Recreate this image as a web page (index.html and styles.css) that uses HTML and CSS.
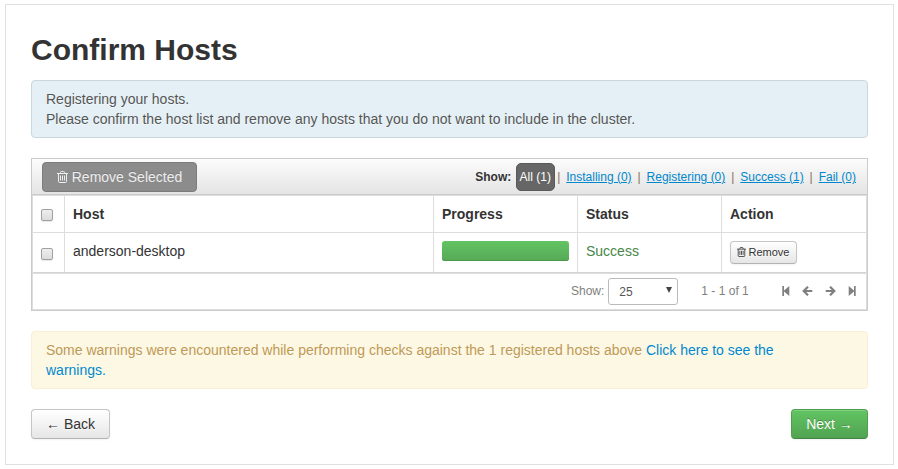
FILE: index.html
```html
<!DOCTYPE html>
<html lang="en">
<head>
<meta charset="utf-8">
<title>Confirm Hosts</title>
<link rel="stylesheet" href="styles.css">
</head>
<body>
<svg class="defs" width="0" height="0" aria-hidden="true">
  <symbol id="trash" viewBox="0 0 11 12"><path d="M0 2.500h11M3.500 2.500v-1q0-1 1-1h2q1 0 1 1v1M1.500 2.500v8q0 1 1 1h6q1 0 1-1v-8M3.500 4.500v5M5.500 4.500v5M7.500 4.500v5" fill="none" stroke="currentColor"/></symbol>
  <symbol id="first" viewBox="0 0 8 10"><path d="M0.300 0h1.700v4.500L7.300 0v10L2 5.500V10H0.300z" fill="currentColor"/></symbol>
  <symbol id="arrow" viewBox="0 0 11 10"><path d="M6 0.700L1.700 5L6 9.300M2 5h8.300" fill="none" stroke="currentColor" stroke-width="2.200"/></symbol>
</svg>
<main class="wizard">
  <h1>Confirm Hosts</h1>
  <div class="alert info">Registering your hosts.<br>Please confirm the host list and remove any hosts that you do not want to include in the cluster.</div>
  <section class="hosts">
    <div class="toolbar">
      <button class="btn dark"><svg class="icon"><use href="#trash"/></svg>Remove Selected</button>
      <div class="filters"><b>Show:</b><a class="active">All (1)</a><i>|</i><a>Installing (0)</a><i>|</i><a>Registering (0)</a><i>|</i><a>Success (1)</a><i>|</i><a>Fail (0)</a></div>
    </div>
    <div class="table">
      <div class="row head"><div><span class="check"></span></div><div>Host</div><div>Progress</div><div>Status</div><div>Action</div></div>
      <div class="row item"><div><span class="check"></span></div><div>anderson-desktop</div><div><span class="bar"></span></div><div class="success">Success</div><div><button class="btn mini"><svg class="icon"><use href="#trash"/></svg>Remove</button></div></div>
      <div class="pager">
        <span>Show:</span>
        <div class="select"><span>25</span><svg width="6" height="6"><path d="M0 0h6L3 6z" fill="#444"/></svg></div>
        <span class="range">1 - 1 of 1</span>
        <div class="nav">
          <svg width="8" height="10"><use href="#first"/></svg>
          <svg width="11" height="10"><use href="#arrow"/></svg>
          <svg class="flip" width="11" height="10"><use href="#arrow"/></svg>
          <svg class="flip" width="8" height="10"><use href="#first"/></svg>
        </div>
      </div>
    </div>
  </section>
  <div class="alert warn">Some warnings were encountered while performing checks against the 1 registered hosts above <a>Click here to see the<br>warnings.</a></div>
  <div class="actions"><button class="btn">← Back</button><button class="btn green">Next →</button></div>
</main>
</body>
</html>
```

FILE: styles.css
```css
* { box-sizing: border-box; }
body { margin: 0; padding: 4px 4px 4px 5px; background: #fff; color: #333; font: 14px/20px "Liberation Sans", Arial, sans-serif; }
.defs { position: absolute; }
.wizard { width: 889px; height: 461px; border: 1px solid #e0e0e0; padding: 25px; }
h1 { margin: 0 0 10px; font-size: 30px; line-height: 40px; }
.alert { height: 58px; padding: 8px 14px; border: 1px solid; border-radius: 4px; text-shadow: 0 1px 0 rgba(255,255,255,.5); }
.info { background: #e4f0f5; border-color: #c9d8dc; color: #555; }
.warn { background: #fcf8e3; border-color: #fbeed5; color: #c09853; white-space: nowrap; }
.hosts { height: 153px; margin: 20px 0; border: 1px solid #ccc; }
.toolbar { display: flex; justify-content: space-between; height: 36px; padding: 3px 11px 0 10px; border-bottom: 1px solid #ccc; background: linear-gradient(#fcfcfc, #e4e4e4); }
.filters { display: flex; font-size: 12px; line-height: 30px; }
.filters b { margin-right: 5px; }
.filters i { width: 15px; text-align: center; font-style: normal; color: #8a6d5a; }
.filters i:first-of-type { width: 11px; text-align: left; padding-left: 2px; }
.filters a { color: #0088cc; text-decoration: underline; }
.filters .active { width: 39px; height: 28px; margin-top: 1px; padding-right: 1px; line-height: 26px; text-align: center; text-decoration: none; color: #fff; background: #666; border: 1px solid #5a5a5a; border-radius: 5px; }
.btn { display: flex; align-items: center; justify-content: center; height: 30px; margin: 0; padding: 0 14px; border: 1px solid #c5c5c5; border-bottom-color: #b3b3b3; border-radius: 4px; font: inherit; color: #333; white-space: nowrap; background: linear-gradient(#fff, #e6e6e6); box-shadow: inset 0 1px 0 rgba(255,255,255,.2), 0 1px 2px rgba(0,0,0,.05); text-shadow: 0 1px 1px rgba(255,255,255,.75); }
.icon { flex: none; width: 11px; height: 12px; margin-right: 4px; }
.dark { width: 155px; padding: 0; background: #8c8c8c; border-color: #7c7c7c; color: #eee; text-shadow: 0 -1px 0 rgba(0,0,0,.15); box-shadow: none; }
.mini { width: 67px; height: 23px; padding: 0 1px 1px 0; font-size: 11px; }
.mini .icon { width: 9px; height: 10px; margin-right: 3px; }
.green { width: 77px; color: #fff; background: linear-gradient(#62c462, #51a351); border-color: #4f9f4f; border-bottom-color: #428542; text-shadow: 0 -1px 0 rgba(0,0,0,.25); }
.table { height: 115px; border: 1px solid #ddd; }
.row { display: grid; grid-template-columns: 32px 369px 144px 144px 1fr; border-bottom: 1px solid #ddd; }
.row > div { padding: 8px 8px 0; border-left: 1px solid #ddd; }
.row > div:first-child { border-left: 0; padding-right: 0; }
.row > div:nth-child(n+2) { margin-left: -1px; }
.head { height: 37px; font-weight: bold; }
.item { height: 40px; border-color: #d4d4d4; }
.check { display: block; width: 12px; height: 12px; margin-top: 5px; border: 1px solid #a0a0a0; border-radius: 2px; background: linear-gradient(#eee, #dcdcdc); box-shadow: 0 1px 1px rgba(0,0,0,.1); }
.item .check { margin-top: 7px; }
.bar { display: block; width: 127px; height: 20px; border-radius: 3px; background: linear-gradient(#62c462, #57a957); box-shadow: inset 0 -1px 0 #4b984b; }
.row .success { color: #468847; }
.pager { display: flex; align-items: center; height: 36px; padding: 0 0 2px 538px; border-top: 1px solid #ddd; font-size: 12px; color: #808080; white-space: nowrap; }
.select { display: flex; align-items: center; justify-content: space-between; width: 70px; height: 27px; margin: 1px 0 0 4px; padding: 1px 5px 0 10px; border: 1px solid #bbb; border-radius: 3px; color: #555; }
.select svg { margin-top: -3px; }
.range { margin-left: 23px; }
.nav { display: flex; align-items: center; gap: 12px; margin-left: 33px; color: #808080; }
.flip { transform: scaleX(-1); }
.warn a { color: #0088cc; }
.actions { display: flex; justify-content: space-between; margin-top: 20px; }
```
